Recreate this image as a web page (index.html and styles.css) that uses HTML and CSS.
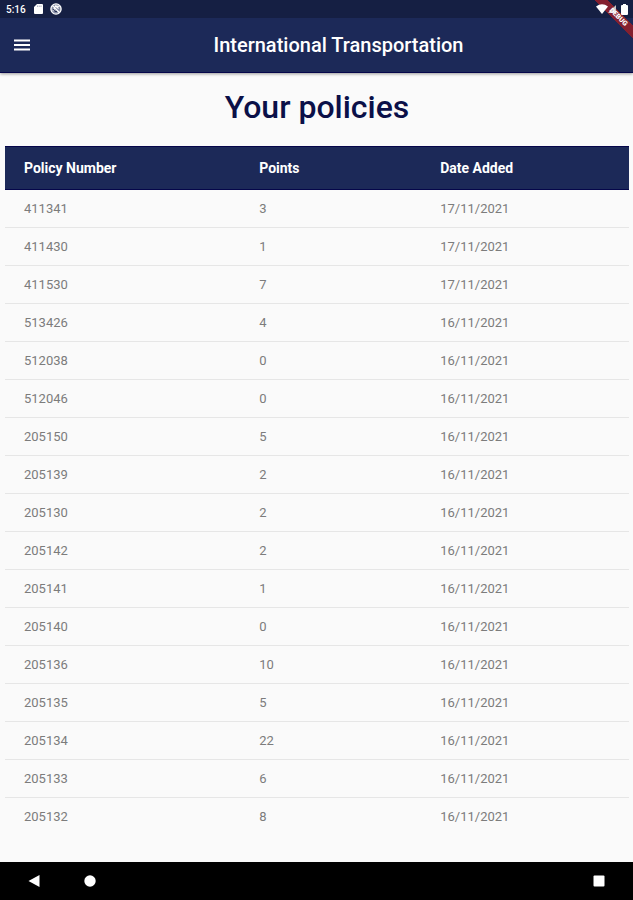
FILE: index.html
```html
<!DOCTYPE html>
<html lang="en">
<head>
<meta charset="utf-8">
<meta name="viewport" content="width=device-width, initial-scale=1">
<title>International Transportation</title>
<link rel="stylesheet" href="styles.css">
</head>
<body>
<header class="top">
  <div class="status">
    <span class="clock">5:16</span>
    <svg class="sd" width="9" height="10" viewBox="0 0 9 10" aria-hidden="true"><path d="M3 0H8Q9 0 9 1V9Q9 10 8 10H1Q0 10 0 9V3Z" fill="#fff"/><path d="M3.5 1.5V3M5.2 1.5V3M7 1.5V3" stroke="#8d93ab" stroke-width=".7"/></svg>
    <svg width="12" height="12" viewBox="0 0 12 12" aria-hidden="true"><circle cx="6" cy="6" r="5.1" fill="#858ca5" stroke="#fff" stroke-width="1.3"/><path d="M2.5 2.7L9.3 9.5M3 8L5.6 3L8.6 5.5M6 3L9.5 3.5" stroke="#fff" stroke-width="1.2" fill="none"/><path d="M3 6L5 8.5H7" stroke="#263052" fill="none"/></svg>
    <div class="signals">
      <svg width="12" height="10" viewBox="0 0 12 10" aria-hidden="true"><path d="M0 2.5Q6-2 12 2.5L6 10Z" fill="#fff"/></svg>
      <svg class="cell" width="8" height="8" viewBox="0 0 8 8" aria-hidden="true"><path d="M8 0V8H0Z" fill="#c9c4c8"/></svg>
      <svg width="7" height="11" viewBox="0 0 7 11" aria-hidden="true"><path d="M2 0H5V1H6Q7 1 7 2V10Q7 11 6 11H1Q0 11 0 10V2Q0 1 1 1H2Z" fill="#fff"/></svg>
    </div>
  </div>
  <div class="appbar">
    <button class="menu" type="button" aria-label="Open menu"><svg width="16" height="12" viewBox="0 0 16 12" aria-hidden="true"><path d="M0 1.5H16M0 6H16M0 10.5H16" stroke="#fff" stroke-width="2"/></svg></button>
    <span class="title">International Transportation</span>
  </div>
  <div class="corner"><span class="ribbon">DEBUG</span></div>
</header>
<main class="content">
  <h1>Your policies</h1>
  <table>
    <colgroup><col class="number"><col class="points"><col></colgroup>
    <thead><tr><th scope="col">Policy Number</th><th scope="col">Points</th><th scope="col">Date Added</th></tr></thead>
    <tbody>
      <tr><td>411341</td><td>3</td><td>17/11/2021</td></tr>
      <tr><td>411430</td><td>1</td><td>17/11/2021</td></tr>
      <tr><td>411530</td><td>7</td><td>17/11/2021</td></tr>
      <tr><td>513426</td><td>4</td><td>16/11/2021</td></tr>
      <tr><td>512038</td><td>0</td><td>16/11/2021</td></tr>
      <tr><td>512046</td><td>0</td><td>16/11/2021</td></tr>
      <tr><td>205150</td><td>5</td><td>16/11/2021</td></tr>
      <tr><td>205139</td><td>2</td><td>16/11/2021</td></tr>
      <tr><td>205130</td><td>2</td><td>16/11/2021</td></tr>
      <tr><td>205142</td><td>2</td><td>16/11/2021</td></tr>
      <tr><td>205141</td><td>1</td><td>16/11/2021</td></tr>
      <tr><td>205140</td><td>0</td><td>16/11/2021</td></tr>
      <tr><td>205136</td><td>10</td><td>16/11/2021</td></tr>
      <tr><td>205135</td><td>5</td><td>16/11/2021</td></tr>
      <tr><td>205134</td><td>22</td><td>16/11/2021</td></tr>
      <tr><td>205133</td><td>6</td><td>16/11/2021</td></tr>
      <tr><td>205132</td><td>8</td><td>16/11/2021</td></tr>
    </tbody>
  </table>
</main>
<nav class="system" aria-label="System">
  <button type="button" aria-label="Back"><svg width="12" height="12" viewBox="0 0 12 12" aria-hidden="true"><path d="M11.5 0V12L.5 6Z" fill="#fff"/></svg></button>
  <button type="button" aria-label="Home"><svg width="12" height="12" viewBox="0 0 12 12" aria-hidden="true"><circle cx="6" cy="6" r="5.7" fill="#fff"/></svg></button>
  <button class="recent" type="button" aria-label="Recent apps"><svg width="12" height="12" viewBox="0 0 12 12" aria-hidden="true"><rect x=".5" y=".5" width="11" height="11" rx="1" fill="#fff"/></svg></button>
</nav>
</body>
</html>
```
FILE: styles.css
```css
* {
  box-sizing: border-box;
}

body {
  margin: 0;
  min-height: 100vh;
  display: flex;
  flex-direction: column;
  background: #fafafa;
  font-family: Roboto, "Liberation Sans", sans-serif;
}

button {
  display: flex;
  align-items: center;
  justify-content: center;
  padding: 0;
  border: 0;
  background: none;
}

.top {
  position: relative;
  background: #1c2958;
  color: #fff;
  border-bottom: 1px solid #05064a;
  box-shadow: 0 1px 3px rgba(0, 0, 0, 0.4);
}

.status {
  display: flex;
  align-items: center;
  height: 18px;
  padding: 0 5px 0 6px;
  background: #151f43;
}

.clock {
  width: 28px;
  font-size: 10px;
  font-weight: 500;
}

.sd {
  margin-right: 7px;
}

.signals {
  position: relative;
  z-index: 1;
  display: flex;
  align-items: center;
  margin-left: auto;
}

.cell {
  margin-right: 5px;
}

.appbar {
  display: grid;
  grid-template-columns: 44px 1fr;
  align-items: center;
  height: 54px;
}

.menu {
  height: 44px;
}

.title {
  text-align: center;
  font-size: 20px;
  font-weight: 500;
}

.corner {
  position: absolute;
  top: 0;
  right: 0;
  width: 48px;
  height: 48px;
  overflow: hidden;
  pointer-events: none;
  background: linear-gradient(45deg, transparent 60%, #84202f 60%, #84202f 73%, transparent 73%);
}

.ribbon {
  position: absolute;
  z-index: 2;
  top: 13px;
  right: -25px;
  width: 80px;
  text-align: center;
  font-size: 7px;
  font-weight: 900;
  line-height: 9px;
  transform: rotate(45deg);
}

.content {
  flex: 1;
  padding: 14px 4px 24px 5px;
}

h1 {
  margin: 0 0 19px;
  text-align: center;
  color: #0b1048;
  font-size: 32px;
  font-weight: 500;
  line-height: 40px;
}

table {
  width: 100%;
  table-layout: fixed;
  border-collapse: separate;
  border-spacing: 0;
}

.number {
  width: 37.7%;
}

.points {
  width: 29%;
}

th,
td {
  padding: 0 19px;
  text-align: left;
  font-size: 13px;
}

th {
  height: 44px;
  background: #1c2958;
  border: solid #05064a;
  border-width: 1px 0;
  color: #fff;
  font-size: 14px;
  font-weight: 700;
}

td {
  height: 38px;
  border-bottom: 1px solid #e6e6e6;
  color: #7c7c7c;
  font-weight: 400;
}

tr:last-child td {
  border-bottom-color: transparent;
}

.system {
  display: flex;
  align-items: center;
  height: 38px;
  padding: 0 10px;
  gap: 8px;
  background: #000;
}

.system button {
  width: 48px;
  height: 38px;
}

.system .recent {
  margin-left: auto;
}
```
